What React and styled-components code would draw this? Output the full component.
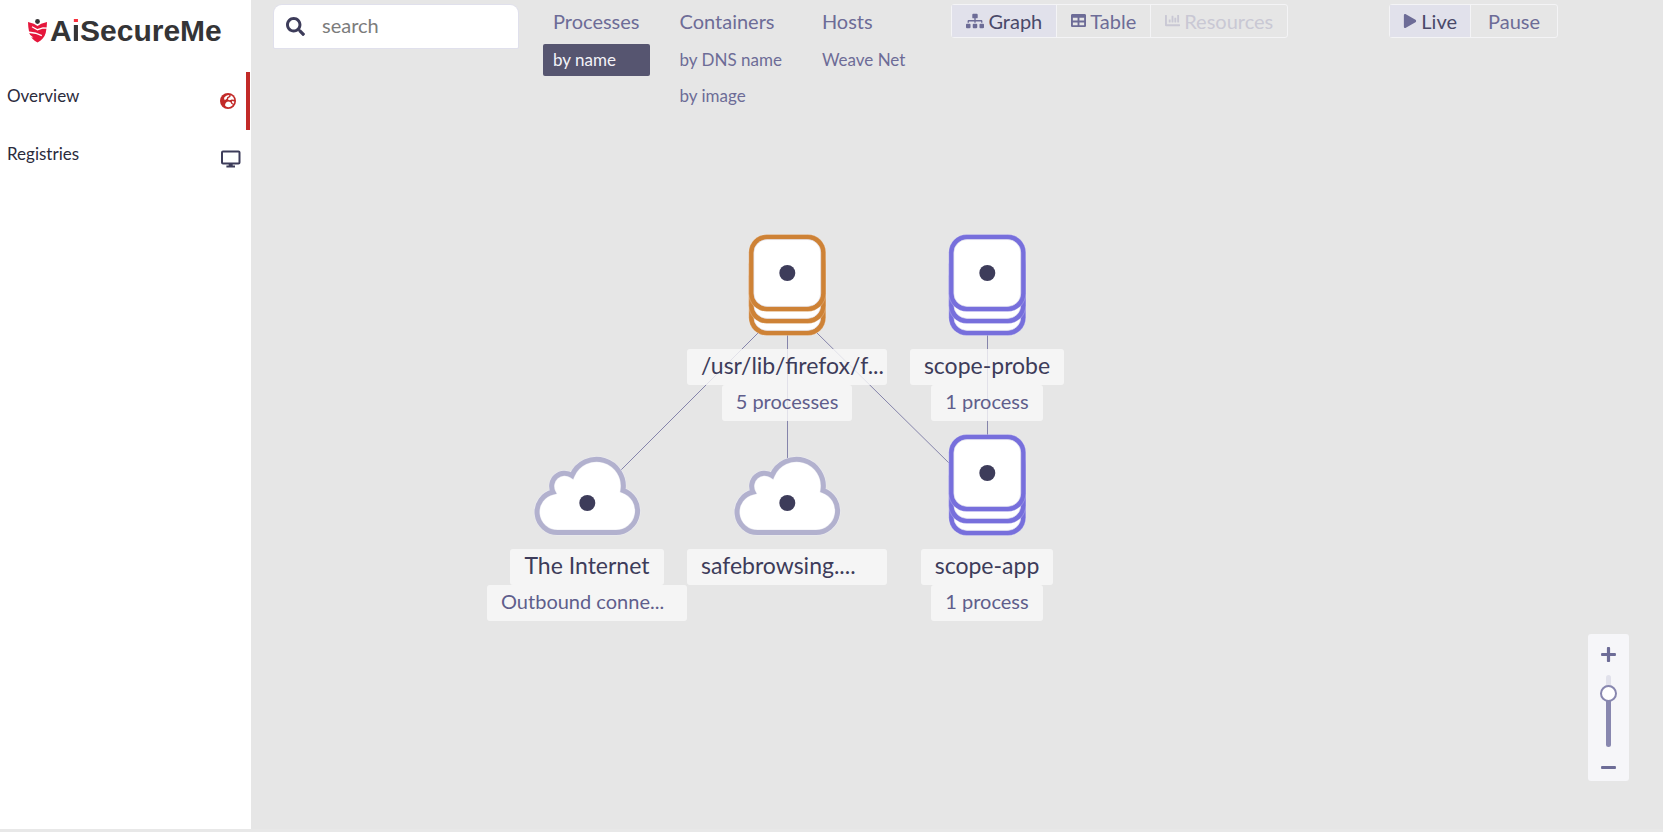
import React, { useState } from "react";
import styled, { createGlobalStyle } from "styled-components";
import { FaSearch, FaSitemap, FaTable, FaChartBar, FaPlay, FaPlus, FaMinus } from "react-icons/fa";

const GlobalStyle = createGlobalStyle`
  *, *::before, *::after { box-sizing: border-box; }
  body {
    margin: 0;
    background: #e8e8e8;
    color: #3d3c5a;
    font-family: Lato, "Liberation Sans", sans-serif;
    font-size: 17px;
  }
  button, input { font-family: inherit; }
  svg { display: block; flex-shrink: 0; }
`;

const Page = styled.div`
  display: flex;
  min-height: 100vh;
  padding-bottom: 3px;
`;

/* Sidebar */
const Sidebar = styled.aside`
  flex: 0 0 251px;
  background: #fff;
`;

const Brand = styled.a`
  display: flex;
  align-items: center;
  gap: 2px;
  height: 72px;
  padding: 0 0 11px 27px;
  color: #343436;
  font: bold 30px/36px "Liberation Sans", Arial, sans-serif;
  text-decoration: none;
`;

const DottedI = styled.span`
  color: transparent;
  background: linear-gradient(#f8303c 11px, #343436 11px);
  -webkit-background-clip: text;
  background-clip: text;
`;

const SideLink = styled.a`
  display: flex;
  align-items: flex-start;
  justify-content: space-between;
  height: 58px;
  margin-right: 1px;
  padding: 14px 0 0 7px;
  border-right: 4px solid ${(p) => (p.$active ? "#c22a28" : "transparent")};
  color: #2b2b3c;
  font-size: 17px;
  line-height: 20px;
  text-decoration: none;
`;

const SideIcon = styled.span`
  display: flex;
  align-items: center;
  width: 26px;
  height: 29px;
  color: ${(p) => (p.$active ? "#c22a28" : "#3d3c5a")};
`;

/* Main area */
const Main = styled.main`
  position: relative;
  flex: 1;
  min-width: 0;
  background: #e6e6e6;
`;

const Header = styled.header`
  display: flex;
  align-items: flex-start;
  min-height: 120px;
  padding: 4px 105px 0 23px;
`;

const SearchBox = styled.label`
  display: flex;
  align-items: center;
  gap: 17px;
  flex: 0 0 244px;
  height: 43px;
  margin-top: 1px;
  padding: 0 11px 0 12px;
  border-radius: 8px 8px 1px 1px;
  background: #fff;
  box-shadow: 0 0 0 1px #e0e0ec;
`;

const SearchInput = styled.input`
  width: 100%;
  min-width: 0;
  padding: 0 0 4px;
  border: 0;
  outline: 0;
  background: transparent;
  color: #3d3c5a;
  font-size: 20px;
  line-height: 24px;
  &::placeholder { color: #7c7c7c; opacity: 1; }
`;

const Topologies = styled.nav`
  display: flex;
  gap: 20px;
  margin-left: 25px;
`;

const TopologyColumn = styled.div`
  display: flex;
  flex-direction: column;
  gap: 4px;
`;

const TopologyButton = styled.button`
  height: ${(p) => (p.$main ? 36 : 32)}px;
  padding: 0 10px ${(p) => (p.$main ? 3 : 0)}px;
  border: 0;
  border-radius: 2px;
  background: ${(p) => (p.$selected ? "#565570" : "transparent")};
  color: ${(p) => (p.$selected ? "#f3f3f8" : "#6d6c97")};
  font-size: ${(p) => (p.$main ? 20 : 17)}px;
  line-height: 24px;
  text-align: left;
  white-space: nowrap;
`;

const Segmented = styled.div`
  display: flex;
  flex-shrink: 0;
  height: 34px;
  margin-left: ${(p) => (p.$end ? "auto" : "36px")};
  border: 1px solid #f4f4f6;
  border-radius: 3px;
`;

const Segment = styled.button`
  display: flex;
  align-items: center;
  justify-content: center;
  gap: 4px;
  padding: 0 ${(p) => p.$pad || 14}px 1px;
  border: 0;
  border-left: 1px solid #f4f4f6;
  background: ${(p) => (p.$selected ? "#e1e1eb" : "transparent")};
  color: ${(p) => (p.$selected ? "#4a4969" : "#6d6c97")};
  font-size: 20px;
  line-height: 24px;
  &:first-child { border-left: 0; }
  &:disabled { color: #c9c8d4; }
  svg { color: ${(p) => (p.disabled ? "#c9c8d4" : "#6d6c97")}; }
`;

/* Graph */
const Canvas = styled.section`
  position: relative;
  height: 520px;
`;

const Edges = styled.svg`
  position: absolute;
  top: 0;
  left: 0;
  line { stroke: #8584ab; stroke-width: 1; }
`;

const NodeBox = styled.div`
  position: absolute;
  left: ${(p) => p.$x}px;
  top: ${(p) => p.$y}px;
  display: flex;
  flex-direction: column;
  align-items: center;
  width: 200px;
  margin-left: -100px;
`;

const NodeLabel = styled.div`
  width: ${(p) => (p.$full ? "100%" : "auto")};
  height: 36px;
  padding: 0 14px;
  border-radius: 3px;
  background: rgba(249, 249, 249, 0.8);
  color: ${(p) => (p.$minor ? "#5f5e8c" : "#3d3c5a")};
  font-size: ${(p) => (p.$minor ? 20 : 23)}px;
  line-height: 33px;
  white-space: nowrap;
`;

/* Zoom control */
const ZoomControl = styled.div`
  position: absolute;
  right: 34px;
  bottom: 48px;
  display: flex;
  flex-direction: column;
  align-items: center;
  width: 41px;
  height: 147px;
  border-radius: 3px;
  background: #f6f6f9;
`;

const ZoomButton = styled.button`
  display: flex;
  align-items: center;
  justify-content: center;
  width: 41px;
  height: ${(p) => p.$h}px;
  padding: 0;
  border: 0;
  background: transparent;
  color: #6d6c97;
  &:last-child { margin-top: auto; }
`;

const ZoomSlider = styled.input`
  appearance: none;
  writing-mode: vertical-lr;
  direction: rtl;
  width: 17px;
  height: 72px;
  margin: 0;
  background: transparent;
  &::-webkit-slider-runnable-track {
    width: 5px;
    height: 72px;
    border-radius: 3px;
    background: linear-gradient(#e1e1eb 25%, #8887af 25%);
  }
  &::-webkit-slider-thumb {
    appearance: none;
    width: 17px;
    height: 17px;
    margin-left: -6px;
    border: 2px solid #8887af;
    border-radius: 50%;
    background: #fff;
  }
`;

const ShieldLogo = () => (
  <svg width="21" height="24" viewBox="0 0 21 24" aria-hidden="true">
    <path
      d="M1 3 L6.8 4.8 L10.5 7 L14.2 4.8 L20 3 L19.7 8 L18.7 14 C17.6 18.2 14.6 21.6 10.5 23.5 C6.4 21.6 3.4 18.2 2.3 14 L1.3 8 Z"
      fill="#e5173c"
    />
    <path d="M20.5 9.2 L16 9 L10.5 10.7 L5 7.8" stroke="#fff" strokeWidth="1.3" fill="none" />
    <path d="M0.5 13 L8.6 14.2 L14.8 16.6" stroke="#fff" strokeWidth="1.4" fill="none" />
    <path d="M1 14.2 L6.4 18.4 L2.6 18.2 Z" fill="#fff" />
    <circle cx="10.5" cy="2.5" r="2.4" fill="#343436" />
  </svg>
);

const GlobeIcon = () => (
  <svg width="16" height="16" viewBox="0 0 17 17" aria-hidden="true">
    <circle cx="8.5" cy="8.5" r="8.5" fill="currentColor" />
    <g fill="#fff">
      <path d="M4.2 5.4 C5.6 3.2 7.6 2 10 2 L9.4 3.4 L7.6 4.6 L7.2 6.2 L5 7.6 Z" />
      <path d="M11.4 2.4 C13.4 3.3 14.8 5 15.1 7.1 L12.6 6.8 L10.2 7.6 L8.4 7 L9 5.4 L11 4.2 Z" />
      <path d="M5.4 13.4 C5.2 11.2 6.4 9.4 8.6 9 L11 9.6 L12 11.4 L13.8 12.6 C12.6 14.2 10.8 15.1 8.8 15.1 C7.4 15.1 6.2 14.4 5.4 13.4 Z" />
      <path d="M12.6 8.6 L15.2 9 C15.1 10 14.9 10.8 14.5 11.5 L13 10.6 Z" />
    </g>
  </svg>
);

const MonitorIcon = () => (
  <svg width="21" height="18" viewBox="0 0 21 18" aria-hidden="true">
    <rect x="2" y="1.5" width="17.5" height="12" rx="1" fill="none" stroke="currentColor" strokeWidth="2" />
    <path d="M8.7 13.5 h4 v2 h2.3 v2 H6.4 v-2 h2.3 Z" fill="currentColor" />
  </svg>
);

const Stack = ({ color }) => (
  <svg width="110" height="119" viewBox="-55 -43 110 119" aria-hidden="true">
    {[24, 12, 0].map((dy) => (
      <g key={dy} transform={`translate(0.3 ${dy})`}>
        <rect x="-38.5" y="-38.5" width="77" height="77" rx="18" fill={color} stroke="#fff" strokeOpacity="0.4" strokeWidth="0.6" />
        <rect x="-33.4" y="-33.4" width="66.8" height="66.8" rx="13" fill="#fff" stroke="#e3e2ee" strokeWidth="0.7" />
      </g>
    ))}
    <circle cx="0.3" r="8" fill="#3d3c5a" />
  </svg>
);

const CLOUD =
  "M-29.5 59.5 A20.5 20.5 0 0 1 -34 19 A13 13 0 0 1 -15 2.5 A26.75 26.75 0 0 1 36 17.3 A21.7 21.7 0 0 1 28.5 59.5 Z";

const Cloud = ({ color }) => (
  <svg width="110" height="119" viewBox="-55 -43 110 119" aria-hidden="true">
    <path d={CLOUD} fill="#fff" stroke="#ececf2" strokeWidth="6" />
    <path d={CLOUD} fill="none" stroke={color} strokeWidth="5" />
    <circle cx="0.3" cy="30" r="8" fill="#3d3c5a" />
  </svg>
);

const topologies = [
  { name: "Processes", views: ["by name"] },
  { name: "Containers", views: ["by DNS name", "by image"] },
  { name: "Hosts", views: ["Weave Net"] },
];

const nodes = [
  { x: 536, y: 110, shape: Stack, color: "#ce8236", label: "/usr/lib/firefox/f...", full: true, minor: "5 processes" },
  { x: 736, y: 110, shape: Stack, color: "#776fdc", label: "scope-probe", minor: "1 process" },
  { x: 336, y: 310, shape: Cloud, color: "#b2b1ce", label: "The Internet", minor: "Outbound conne...", minorFull: true },
  { x: 536, y: 310, shape: Cloud, color: "#b2b1ce", label: "safebrowsing....", full: true },
  { x: 736, y: 310, shape: Stack, color: "#776fdc", label: "scope-app", minor: "1 process" },
];

export default function App() {
  const [view, setView] = useState("by name");
  return (
    <>
      <GlobalStyle />
      <Page>
        <Sidebar>
          <Brand href="#">
            <ShieldLogo />
            <span>A<DottedI>i</DottedI>SecureMe</span>
          </Brand>
          <nav>
            <SideLink href="#overview" $active>
              Overview
              <SideIcon $active><GlobeIcon /></SideIcon>
            </SideLink>
            <SideLink href="#registries">
              Registries
              <SideIcon><MonitorIcon /></SideIcon>
            </SideLink>
          </nav>
        </Sidebar>

        <Main>
          <Header>
            <SearchBox>
              <FaSearch size={19} />
              <SearchInput type="text" placeholder="search" aria-label="search" />
            </SearchBox>
            <Topologies>
              {topologies.map((t) => (
                <TopologyColumn key={t.name}>
                  <TopologyButton $main>{t.name}</TopologyButton>
                  {t.views.map((v) => (
                    <TopologyButton key={v} $selected={v === view} onClick={() => setView(v)}>
                      {v}
                    </TopologyButton>
                  ))}
                </TopologyColumn>
              ))}
            </Topologies>
            <Segmented>
              <Segment $selected><FaSitemap size={18} />Graph</Segment>
              <Segment><FaTable size={15} />Table</Segment>
              <Segment disabled><FaChartBar size={15} />Resources</Segment>
            </Segmented>
            <Segmented $end>
              <Segment $selected $pad={13}><FaPlay size={14} />Live</Segment>
              <Segment $pad={17}>Pause</Segment>
            </Segmented>
          </Header>

          <Canvas>
            <Edges width="900" height="500" aria-hidden="true">
              <line x1="507" y1="213" x2="369" y2="351" />
              <line x1="536.5" y1="215" x2="536.5" y2="340" />
              <line x1="565" y1="212" x2="700" y2="345" />
              <line x1="736.5" y1="215" x2="736.5" y2="316" />
            </Edges>
            {nodes.map(({ shape: Shape, ...n }) => (
              <NodeBox key={n.label} $x={n.x} $y={n.y}>
                <Shape color={n.color} />
                <NodeLabel $full={n.full}>{n.label}</NodeLabel>
                {n.minor && <NodeLabel $minor $full={n.minorFull}>{n.minor}</NodeLabel>}
              </NodeBox>
            ))}
          </Canvas>

          <ZoomControl>
            <ZoomButton $h={41} aria-label="Zoom in"><FaPlus size={17} /></ZoomButton>
            <ZoomSlider type="range" min="0" max="100" defaultValue="82" aria-label="Zoom" />
            <ZoomButton $h={28} aria-label="Zoom out"><FaMinus size={17} /></ZoomButton>
          </ZoomControl>
        </Main>
      </Page>
    </>
  );
}
